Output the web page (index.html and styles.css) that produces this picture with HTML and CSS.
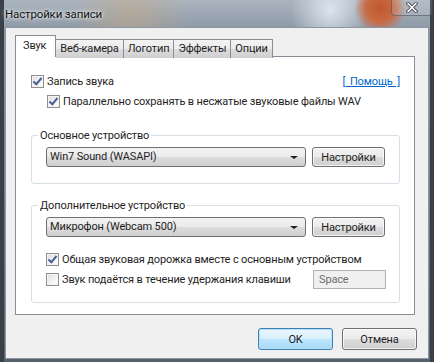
FILE: index.html
```html
<!DOCTYPE html>
<html lang="ru">
<head>
    <meta charset="UTF-8">
    <title>Настройки записи</title>
    <link rel="stylesheet" href="styles.css">
</head>
<body>
    <div class="window">
        <div class="titlebar">
            <span class="title">Настройки записи</span>
            <span class="close-btn">
                <svg width="12" height="11" viewBox="0 0 12 11">
                    <path d="M2 1.5 L10 9.5 M10 1.5 L2 9.5" stroke="#3a3f48" stroke-width="3.2" stroke-linecap="square"/>
                    <path d="M2 1.5 L10 9.5 M10 1.5 L2 9.5" stroke="#ffffff" stroke-width="1.6" stroke-linecap="square"/>
                </svg>
            </span>
        </div>

        <div class="client">
            <!-- Вкладки -->
            <div class="tabs">
                <div class="tab active">Звук</div>
                <div class="tab">Веб-камера</div>
                <div class="tab">Логотип</div>
                <div class="tab">Эффекты</div>
                <div class="tab">Опции</div>
            </div>

            <div class="panel">
                <div class="row top-row">
                    <label class="check"><span class="box checked"></span>Запись звука</label>
                    <a href="#" class="help">[ Помощь ]</a>
                </div>
                <label class="check sub"><span class="box checked"></span>Параллельно сохранять в несжатые звуковые файлы WAV</label>

                <fieldset class="group first">
                    <legend>Основное устройство</legend>
                    <div class="device-row">
                        <div class="combo">Win7 Sound (WASAPI)<span class="arrow"></span></div>
                        <button class="btn">Настройки</button>
                    </div>
                </fieldset>

                <fieldset class="group second">
                    <legend>Дополнительное устройство</legend>
                    <div class="device-row">
                        <div class="combo">Микрофон (Webcam 500)<span class="arrow"></span></div>
                        <button class="btn">Настройки</button>
                    </div>
                    <label class="check opt"><span class="box checked"></span>Общая звуковая дорожка вместе с основным устройством</label>
                    <div class="key-row">
                        <label class="check"><span class="box"></span>Звук подаётся в течение удержания клавиши</label>
                        <div class="key-field">Space</div>
                    </div>
                </fieldset>
            </div>

            <div class="footer">
                <button class="btn big default">OK</button>
                <button class="btn big">Отмена</button>
            </div>
        </div>
    </div>
</body>
</html>
```

FILE: styles.css
```css
body {
    margin: 0;
    padding: 0;
    font-family: Roboto, "Liberation Sans", sans-serif;
    font-size: 11px;
    letter-spacing: -0.15px;
    color: #1e1e1e;
}

/* Окно с "стеклом" Aero */
.window {
    width: 434px;
    height: 362px;
    box-sizing: border-box;
    padding: 0 5px 3px 5px;
    display: flex;
    flex-direction: column;
    background:
        radial-gradient(circle at 380px 8px, #c0582e 0, #c86a44 14px, rgba(200, 120, 90, 0) 26px),
        radial-gradient(ellipse at 330px 10px, rgba(225, 235, 245, 0.9) 0, rgba(225, 235, 245, 0) 40px),
        radial-gradient(ellipse at 130px 14px, rgba(200, 170, 130, 0.5) 0, rgba(200, 170, 130, 0) 60px),
        linear-gradient(to right, #3b4048 0, #3b4048 4px, transparent 4px, transparent 430px, #3b4048 430px),
        linear-gradient(to bottom, #aab4bf 0, #8d98a6 30px, #56606d 100%);
}

.titlebar {
    height: 27px;
    position: relative;
    display: flex;
    align-items: center;
}

.title {
    font-size: 11.5px;
    color: #101010;
    text-shadow: 0 0 6px rgba(255, 255, 255, 0.9), 0 0 3px rgba(255, 255, 255, 0.9);
}

.close-btn {
    position: absolute;
    right: -3px;
    top: -1px;
    width: 41px;
    height: 17px;
    border: 1px solid rgba(70, 80, 95, 0.6);
    border-top: none;
    border-radius: 0 0 4px 4px;
    box-sizing: border-box;
    display: flex;
    justify-content: center;
    align-items: center;
    background: rgba(255, 255, 255, 0.12);
}

.client {
    flex: 1;
    background-color: #f0f0f0;
    border: 1px solid #8d96a2;
    box-sizing: border-box;
    padding: 9px 13px 0 9px;
    display: flex;
    flex-direction: column;
}

/* Вкладки */
.tabs {
    display: flex;
    height: 19px;
    padding-left: 2px;
    position: relative;
    z-index: 1;
}

.tab {
    height: 18px;
    margin-top: 2px;
    padding: 0 4px;
    border: 1px solid #898c95;
    border-bottom: none;
    border-left: none;
    line-height: 17px;
    background: linear-gradient(to bottom, #f3f3f3 0, #ebebeb 50%, #dcdcdc 51%, #cfcfcf 100%);
    color: #1e1e1e;
}

.tab.active {
    height: 21px;
    margin-top: -2px;
    background: #ffffff;
    border-left: 1px solid #898c95;
    padding: 0 9px 0 7px;
    margin-left: -2px;
    line-height: 19px;
}

.panel {
    height: 259px;
    background-color: #ffffff;
    border: 1px solid #898c95;
    box-sizing: border-box;
    padding: 15px 14px 0 15px;
}

.row {
    display: flex;
    justify-content: space-between;
    align-items: center;
}

.check {
    display: flex;
    align-items: center;
    height: 18px;
    white-space: nowrap;
}

.check.sub {
    margin-left: 16px;
    margin-top: 2px;
}

.box {
    flex-shrink: 0;
    width: 13px;
    height: 13px;
    box-sizing: border-box;
    border: 1px solid #8f8f8f;
    background: linear-gradient(135deg, #dcdcdc 0, #f5f5f5 60%, #ffffff 100%);
    margin-right: 3px;
    position: relative;
    box-shadow: inset 0 0 0 1px #f4f4f4;
}

.box.checked::after {
    content: "";
    position: absolute;
    left: 3px;
    top: 0;
    width: 3px;
    height: 7px;
    border: solid #4a5f97;
    border-width: 0 2px 2px 0;
    transform: rotate(40deg);
}

.help {
    color: #0066cc;
    text-decoration: underline;
    word-spacing: 2px;
}

/* Группы */
.group {
    border: 1px solid #d5dfe5;
    border-radius: 3px;
    margin: 0;
    padding: 0 14px;
    min-width: 0;
}

.group legend {
    padding: 0 2px;
    margin-left: -8px;
    color: #1e1e1e;
}

.group.first {
    margin-top: 19px;
    height: 55px;
    box-sizing: border-box;
    padding-top: 5px;
}

.group.second {
    margin-top: 15px;
    height: 104px;
    box-sizing: border-box;
    padding-top: 5px;
}

.device-row {
    display: flex;
    gap: 6px;
}

.combo {
    width: 260px;
    height: 20px;
    box-sizing: border-box;
    border: 1px solid #707070;
    border-radius: 3px;
    background: linear-gradient(to bottom, #f2f2f2 0, #ebebeb 50%, #dddddd 51%, #cfcfcf 100%);
    padding-left: 3px;
    line-height: 18px;
    position: relative;
}

.arrow {
    position: absolute;
    right: 7px;
    top: 8px;
    border-left: 4px solid transparent;
    border-right: 4px solid transparent;
    border-top: 3px solid #1e1e1e;
}

.btn {
    font-family: Roboto, "Liberation Sans", sans-serif;
    font-size: 11px;
    letter-spacing: -0.15px;
    color: #1e1e1e;
    width: 73px;
    height: 20px;
    padding: 0;
    border: 1px solid #707070;
    border-radius: 3px;
    background: linear-gradient(to bottom, #f2f2f2 0, #ebebeb 50%, #dddddd 51%, #cfcfcf 100%);
    box-shadow: inset 0 0 0 1px rgba(255, 255, 255, 0.7);
}

.check.opt {
    margin-top: 13px;
}

.key-row {
    display: flex;
    justify-content: space-between;
    align-items: center;
    margin-top: 2px;
}

.key-field {
    width: 73px;
    height: 19px;
    box-sizing: border-box;
    border: 1px solid #adb2b5;
    background-color: #f0f0f0;
    color: #6d6d6d;
    padding-left: 5px;
    line-height: 17px;
    margin-right: -1px;
}

/* Кнопки внизу */
.footer {
    display: flex;
    justify-content: flex-end;
    gap: 9px;
    padding-top: 13px;
    margin-right: -2px;
}

.btn.big {
    width: 75px;
    height: 22px;
}

.btn.default {
    border-color: #3c7fb1;
    background: linear-gradient(to bottom, #eaf6fd 0, #d9f0fc 50%, #bee6fd 51%, #a7d9f5 100%);
    box-shadow: inset 0 0 0 1px #b9e2f9;
}
```
